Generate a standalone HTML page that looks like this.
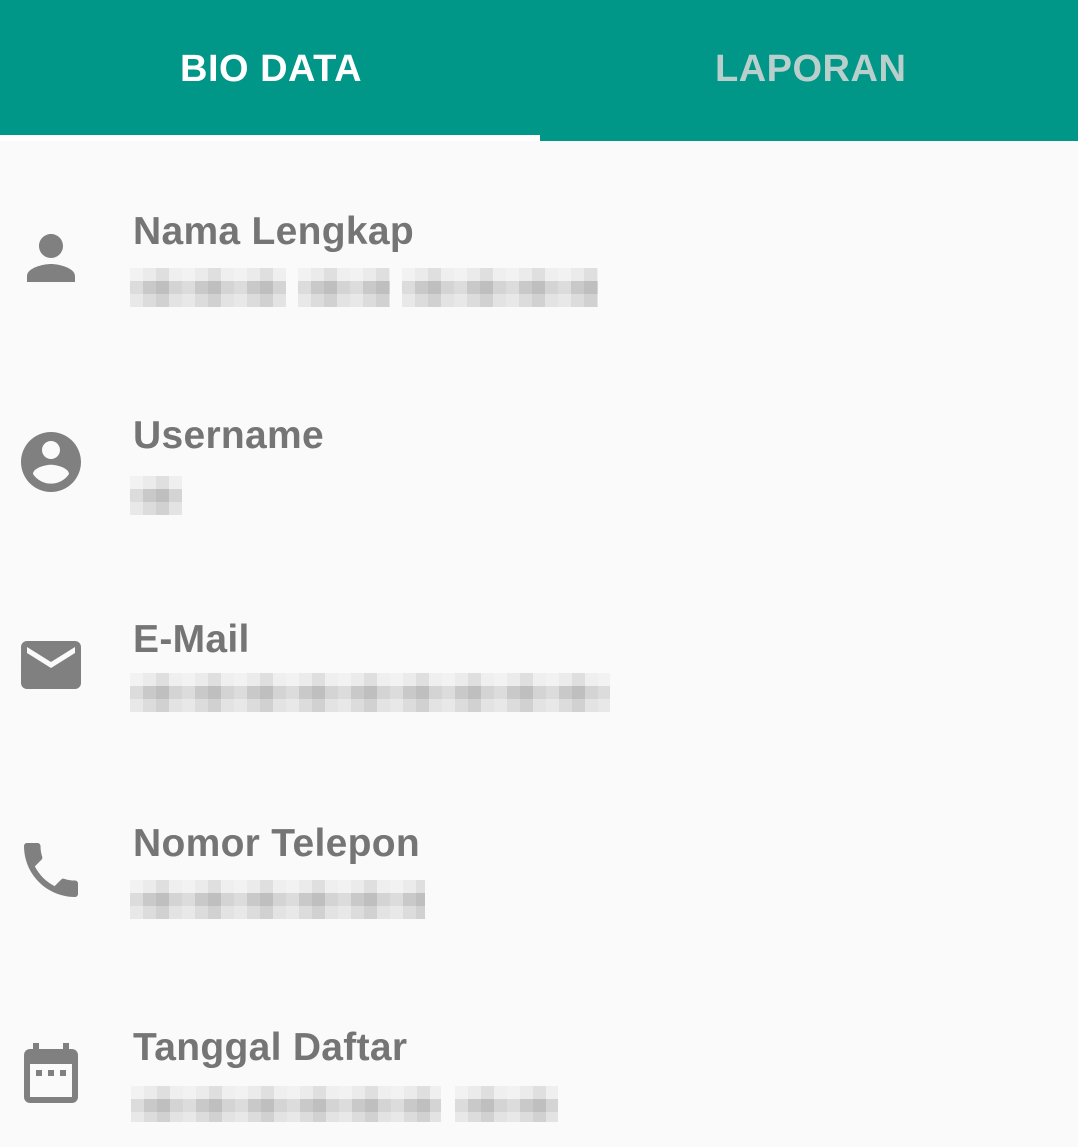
<!DOCTYPE html>
<html><head><meta charset="utf-8">
<style>
html,body{margin:0;padding:0}
body{width:1078px;height:1147px;background:#fafafa;position:relative;overflow:hidden;font-family:"Liberation Sans",sans-serif}
.hdr{position:absolute;left:0;top:0;width:1078px;height:141px;background:#009688}
.ind{position:absolute;left:0;top:135px;width:540px;height:6px;background:#fff}
.tab{position:absolute;top:48px;font-size:38px;font-weight:bold;letter-spacing:0.5px}
.t{position:absolute;left:133px;font-size:39px;font-weight:bold;color:#757575;letter-spacing:0.3px}
svg.i{position:absolute;left:15px;width:72px;height:72px;fill:#808080}
.b{position:absolute;height:39px;
background:
repeating-linear-gradient(90deg,rgba(255,255,255,0.35) 0 13px,rgba(0,0,0,0) 13px 26px,rgba(0,0,0,0.05) 26px 39px,rgba(255,255,255,0.2) 39px 52px),
linear-gradient(180deg,#ebebeb 0 13px,#c9c9c9 13px 26px,#dcdcdc 26px 39px)}
</style></head><body>
<div class="hdr"></div>
<div class="ind"></div>
<div class="tab" style="left:180px;color:#fff">BIO DATA</div>
<div class="tab" style="left:715px;color:#b9cfcc">LAPORAN</div>

<svg class="i" style="top:222px" viewBox="0 0 24 24"><path d="M12 12c2.21 0 4-1.790 4-4s-1.79-4-4-4-4 1.79-4 4 1.79 4 4 4zm0 2c-2.67 0-8 1.34-8 4v2h16v-2c0-2.66-5.33-4-8-4z"/></svg>
<div class="t" style="top:210px">Nama Lengkap</div>
<div class="b" style="left:130px;top:268px;width:156px"></div>
<div class="b" style="left:298px;top:268px;width:92px"></div>
<div class="b" style="left:402px;top:268px;width:196px"></div>

<svg class="i" style="top:426px" viewBox="0 0 24 24"><path d="M12 2C6.48 2 2 6.48 2 12s4.48 10 10 10 10-4.48 10-10S17.52 2 12 2zm0 3c1.66 0 3 1.34 3 3s-1.34 3-3 3-3-1.34-3-3 1.34-3 3-3zm0 14.2c-2.5 0-4.71-1.28-6-3.22.03-1.99 4-3.08 6-3.080 1.99 0 5.97 1.09 6 3.08-1.29 1.94-3.5 3.22-6 3.22z"/></svg>
<div class="t" style="top:414px">Username</div>
<div class="b" style="left:130px;top:476px;width:52px"></div>

<svg class="i" style="top:629px" viewBox="0 0 24 24"><path d="M20 4H4c-1.1 0-1.99.9-1.99 2L2 18c0 1.1.9 2 2 2h16c1.1 0 2-.9 2-2V6c0-1.1-.9-2-2-2zm0 4l-8 5-8-5V6l8 5 8-5v2z"/></svg>
<div class="t" style="top:618px">E-Mail</div>
<div class="b" style="left:130px;top:673px;width:480px"></div>

<svg class="i" style="top:834px" viewBox="0 0 24 24"><path d="M6.62 10.79c1.44 2.83 3.76 5.14 6.59 6.59l2.2-2.2c.27-.27.67-.36 1.02-.24 1.12.37 2.330.57 3.57.57.55 0 1 .45 1 1V20c0 .55-.45 1-1 1-9.39 0-17-7.61-17-17 0-.55.45-1 1-1h3.5c.55 0 1 .45 1 1 0 1.25.2 2.45.57 3.57.11.35.03.74-.25 1.02l-2.2 2.2z"/></svg>
<div class="t" style="top:822px">Nomor Telepon</div>
<div class="b" style="left:130px;top:880px;width:295px"></div>

<svg class="i" style="top:1037px" viewBox="0 0 24 24"><path d="M9 11H7v2h2v-2zm4 0h-2v2h2v-2zm4 0h-2v2h2v-2zm2-7h-1V2h-2v2H8V2H6v2H5c-1.11 0-1.99.9-1.99 2L3 20c0 1.1.89 2 2 2h14c1.1 0 2-.9 2-2V6c0-1.1-.9-2-2-2zm0 16H5V9h14v11z"/></svg>
<div class="t" style="top:1026px">Tanggal Daftar</div>
<div class="b" style="left:131px;top:1086px;width:310px;height:36px"></div>
<div class="b" style="left:455px;top:1086px;width:103px;height:36px"></div>
</body></html>
